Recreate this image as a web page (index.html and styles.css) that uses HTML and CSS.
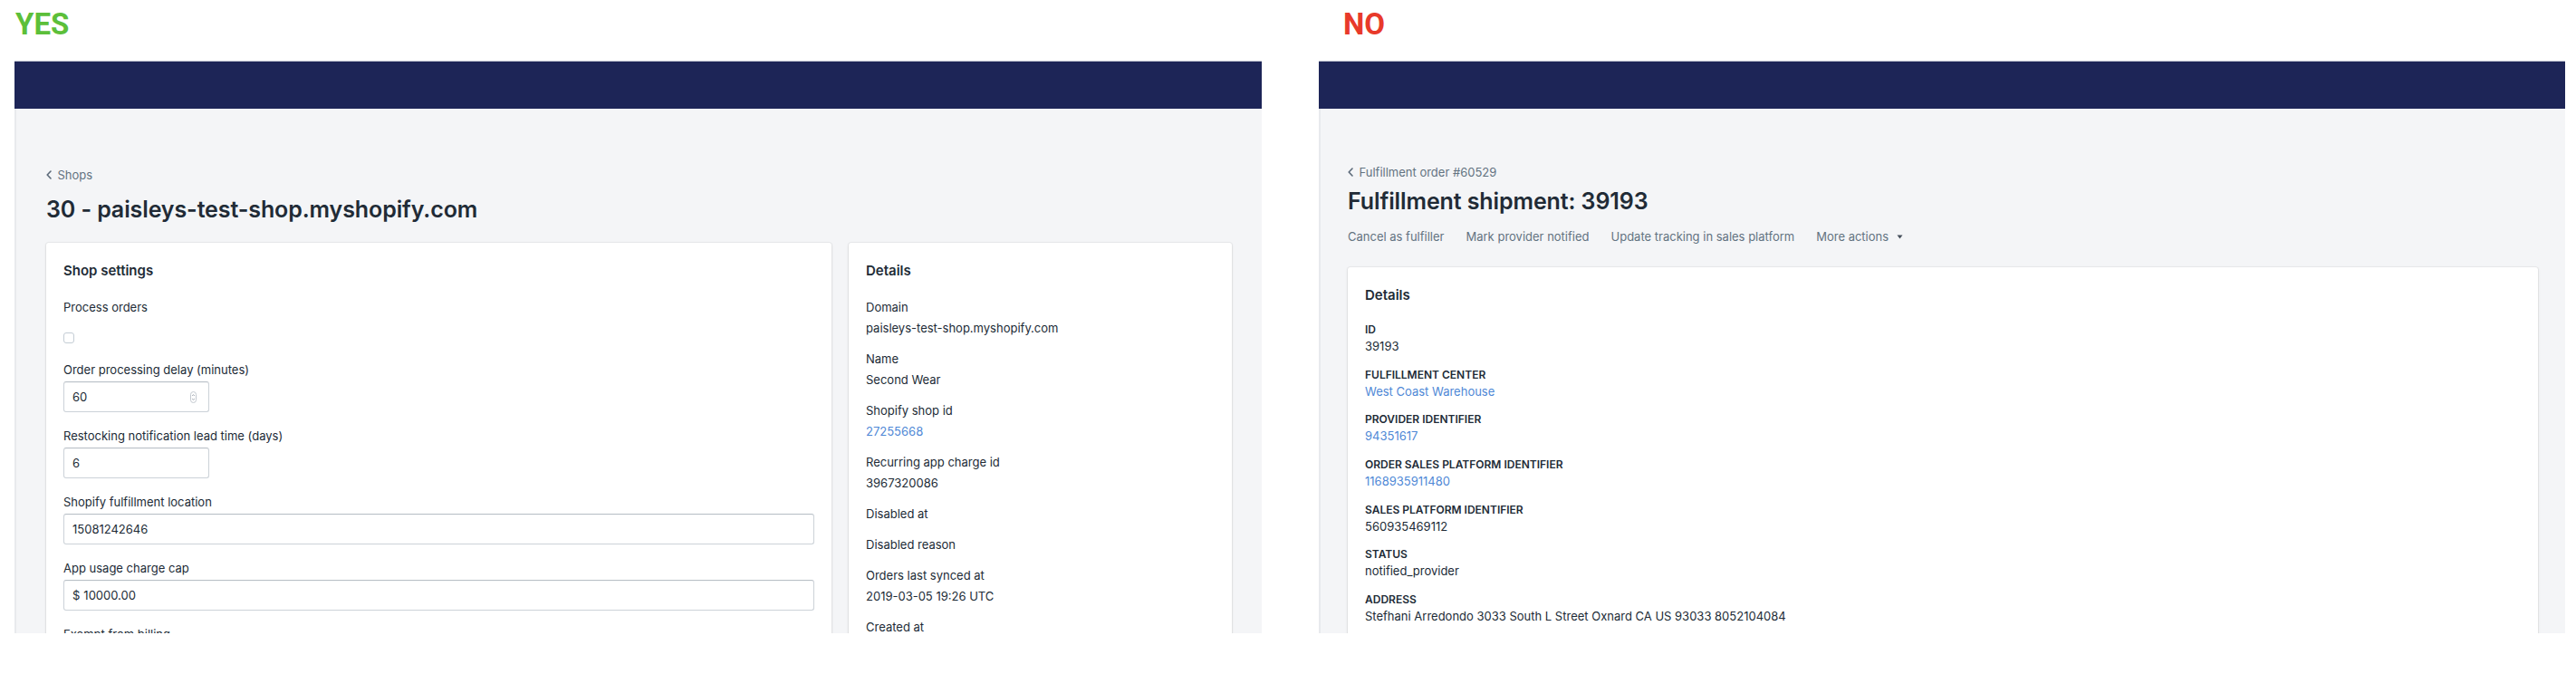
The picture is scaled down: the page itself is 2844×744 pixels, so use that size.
FILE: index.html
```html
<!DOCTYPE html>
<html lang="en">
<head>
<meta charset="utf-8">
<title>Shop vs Fulfillment shipment</title>
<link rel="stylesheet" href="styles.css">
</head>
<body>
<div class="compare">
  <section class="col">
    <div class="verdict verdict-yes">YES</div>
    <div class="frame">
      <div class="topbar"></div>
      <main class="page page-shop">
        <a class="breadcrumb" href="#"><svg class="chev" width="6" height="10" viewBox="0 0 6 10"><path d="M5 1 L1.2 5 L5 9" fill="none" stroke="#5c6a79" stroke-width="1.6" stroke-linecap="round" stroke-linejoin="round"/></svg><span>Shops</span></a>
        <h1 class="title title-shop">30 - paisleys-test-shop.myshopify.com</h1>
        <div class="layout">
          <div class="card">
            <h2 class="card-title">Shop settings</h2>
            <div class="field">
              <label class="field-label">Process orders</label>
              <div class="check-wrap"><input type="checkbox" class="checkbox"></div>
            </div>
            <div class="field">
              <label class="field-label">Order processing delay (minutes)</label>
              <div class="input input-short"><input type="text" value="60"><span class="spinner"><svg width="7" height="13" viewBox="0 0 7 13"><rect x="0.5" y="0.5" width="6" height="12" rx="3" fill="#fff" stroke="#c3c9d0"/><path d="M2.2 5 L3.5 3.6 L4.8 5 M2.2 8 L3.5 9.4 L4.8 8" fill="none" stroke="#8a939d" stroke-width="0.8"/></svg></span></div>
            </div>
            <div class="field">
              <label class="field-label">Restocking notification lead time (days)</label>
              <div class="input input-short"><input type="text" value="6"></div>
            </div>
            <div class="field">
              <label class="field-label">Shopify fulfillment location</label>
              <div class="input"><input type="text" value="15081242646"></div>
            </div>
            <div class="field">
              <label class="field-label">App usage charge cap</label>
              <div class="input"><span class="prefix">$</span><input type="text" value="10000.00"></div>
            </div>
            <div class="field">
              <label class="field-label">Exempt from billing</label>
            </div>
          </div>
          <div class="card">
            <h2 class="card-title">Details</h2>
            <div class="detail"><div class="detail-label">Domain</div><div class="detail-value">paisleys-test-shop.myshopify.com</div></div>
            <div class="detail"><div class="detail-label">Name</div><div class="detail-value">Second Wear</div></div>
            <div class="detail"><div class="detail-label">Shopify shop id</div><div class="detail-value"><a class="link" href="#">27255668</a></div></div>
            <div class="detail"><div class="detail-label">Recurring app charge id</div><div class="detail-value">3967320086</div></div>
            <div class="detail"><div class="detail-label">Disabled at</div></div>
            <div class="detail"><div class="detail-label">Disabled reason</div></div>
            <div class="detail"><div class="detail-label">Orders last synced at</div><div class="detail-value">2019-03-05 19:26 UTC</div></div>
            <div class="detail"><div class="detail-label">Created at</div></div>
          </div>
        </div>
      </main>
    </div>
  </section>

  <section class="col">
    <div class="verdict verdict-no">NO</div>
    <div class="frame">
      <div class="topbar"></div>
      <main class="page page-shipment">
        <a class="breadcrumb" href="#"><svg class="chev" width="6" height="10" viewBox="0 0 6 10"><path d="M5 1 L1.2 5 L5 9" fill="none" stroke="#5c6a79" stroke-width="1.6" stroke-linecap="round" stroke-linejoin="round"/></svg><span>Fulfillment order #60529</span></a>
        <h1 class="title title-shipment">Fulfillment shipment: 39193</h1>
        <div class="actions">
          <a class="action" href="#">Cancel as fulfiller</a>
          <a class="action" href="#">Mark provider notified</a>
          <a class="action" href="#">Update tracking in sales platform</a>
          <a class="action" href="#">More actions<svg class="caret" width="7" height="5" viewBox="0 0 7 5"><path d="M0.5 0.5 L6.5 0.5 L3.5 4.5 Z" fill="#454f5b"/></svg></a>
        </div>
        <div class="card card-shipment">
          <h2 class="card-title">Details</h2>
          <div class="kv"><div class="kv-label">ID</div><div class="kv-value">39193</div></div>
          <div class="kv"><div class="kv-label">Fulfillment center</div><div class="kv-value"><a class="link" href="#">West Coast Warehouse</a></div></div>
          <div class="kv"><div class="kv-label">Provider identifier</div><div class="kv-value"><a class="link" href="#">94351617</a></div></div>
          <div class="kv"><div class="kv-label">Order sales platform identifier</div><div class="kv-value"><a class="link" href="#">1168935911480</a></div></div>
          <div class="kv"><div class="kv-label">Sales platform identifier</div><div class="kv-value">560935469112</div></div>
          <div class="kv"><div class="kv-label">Status</div><div class="kv-value">notified_provider</div></div>
          <div class="kv"><div class="kv-label">Address</div><div class="kv-value">Stefhani Arredondo 3033 South L Street Oxnard CA US 93033 8052104084</div></div>
        </div>
      </main>
    </div>
  </section>
</div>
</body>
</html>
```

FILE: styles.css
```css
html, body {
  margin: 0;
  padding: 0;
  background: #ffffff;
}

body {
  font-family: Inter, "Noto Sans", "Liberation Sans", sans-serif;
  color: #212b36;
  height: 744px;
  overflow: hidden;
}

.compare {
  display: grid;
  grid-template-columns: 1377px 1376px;
  column-gap: 63px;
  padding-left: 16px;
}

.verdict {
  height: 67px;
  box-sizing: border-box;
  padding-top: 10px;
  font-family: Roboto, "Liberation Sans", sans-serif;
  font-weight: 700;
  font-size: 33px;
  line-height: 33px;
}

.verdict-yes {
  color: #5cbf3a;
  padding-left: 1px;
}

.verdict-no {
  color: #e83a2a;
  padding-left: 27px;
}

.frame {
  height: 632px;
  overflow: hidden;
}

.topbar {
  height: 53px;
  box-sizing: border-box;
  background: #1d2557;
  border-top: 1px solid #b9bdcc;
}

.page {
  height: 579px;
  box-sizing: border-box;
  overflow: hidden;
  background: #f4f5f7;
  box-shadow: inset 2px 0 0 #e8eaed;
}

.page-shop {
  padding: 63px 33px 0 35px;
}

.page-shipment {
  padding: 60px 30px 0 32px;
}

.breadcrumb {
  display: flex;
  align-items: center;
  font-size: 13px;
  line-height: 20px;
  color: #637381;
  text-decoration: none;
}

.chev {
  display: block;
  margin-right: 6.5px;
}

.title {
  margin: 0;
  font-size: 25px;
  line-height: 32px;
  font-weight: 600;
  color: #212b36;
  letter-spacing: -0.1px;
}

.title-shop {
  margin-top: 12px;
}

.title-shipment {
  margin-top: 6px;
}

.layout {
  display: grid;
  grid-template-columns: 867fr 423fr;
  column-gap: 19px;
  align-items: start;
  margin-top: 21px;
}

.card {
  background: #ffffff;
  border-radius: 3px;
  box-shadow: 0 0 0 1px rgba(63, 63, 68, 0.05), 0 1px 3px 0 rgba(63, 63, 68, 0.15);
  padding: 19px 19px 20px;
  min-height: 600px;
}

.card-title {
  margin: 0 0 18px;
  font-size: 15px;
  line-height: 24px;
  font-weight: 600;
  color: #212b36;
}

.field {
  margin-bottom: 16px;
}

.field-label {
  display: block;
  font-size: 13px;
  line-height: 20px;
  margin-bottom: 3px;
  color: #212b36;
}

.check-wrap {
  padding: 15px 0 3px;
}

.checkbox {
  appearance: none;
  -webkit-appearance: none;
  display: block;
  margin: 0;
  width: 12px;
  height: 12px;
  box-sizing: border-box;
  border: 1px solid #c4cdd5;
  border-radius: 3px;
  background: #ffffff;
}

.input {
  display: flex;
  align-items: center;
  height: 34px;
  box-sizing: border-box;
  padding: 0 9px;
  background: #ffffff;
  border: 1px solid #ccd2d8;
  border-top-color: #b9c0c7;
  border-radius: 3px;
  box-shadow: inset 0 1px 0 0 rgba(99, 115, 129, 0.06);
}

.input-short {
  width: 161px;
  padding-right: 13px;
}

.input input {
  flex: 1;
  min-width: 0;
  border: 0;
  outline: 0;
  padding: 0;
  margin: 0;
  background: transparent;
  font-family: inherit;
  font-size: 13px;
  line-height: 20px;
  color: #212b36;
}

.prefix {
  font-size: 13px;
  line-height: 20px;
  margin-right: 4px;
  color: #212b36;
}

.spinner svg {
  display: block;
}

.detail {
  margin-bottom: 14px;
}

.detail-label,
.detail-value {
  font-size: 13px;
  line-height: 20px;
  color: #212b36;
}

.detail-value {
  margin-top: 3px;
}

.link {
  color: #4f88d6;
  text-decoration: none;
}

.actions {
  display: flex;
  gap: 24px;
  margin-top: 13px;
  font-size: 13px;
  line-height: 20px;
}

.action {
  display: flex;
  align-items: center;
  color: #637381;
  text-decoration: none;
}

.caret {
  display: block;
  margin-left: 9px;
}

.card-shipment {
  margin-top: 24px;
}

.kv {
  margin-bottom: 13.7px;
}

.kv-label {
  font-size: 12px;
  line-height: 16px;
  font-weight: 600;
  text-transform: uppercase;
  color: #212b36;
}

.kv-value {
  font-size: 13px;
  line-height: 20px;
  color: #212b36;
}
```
